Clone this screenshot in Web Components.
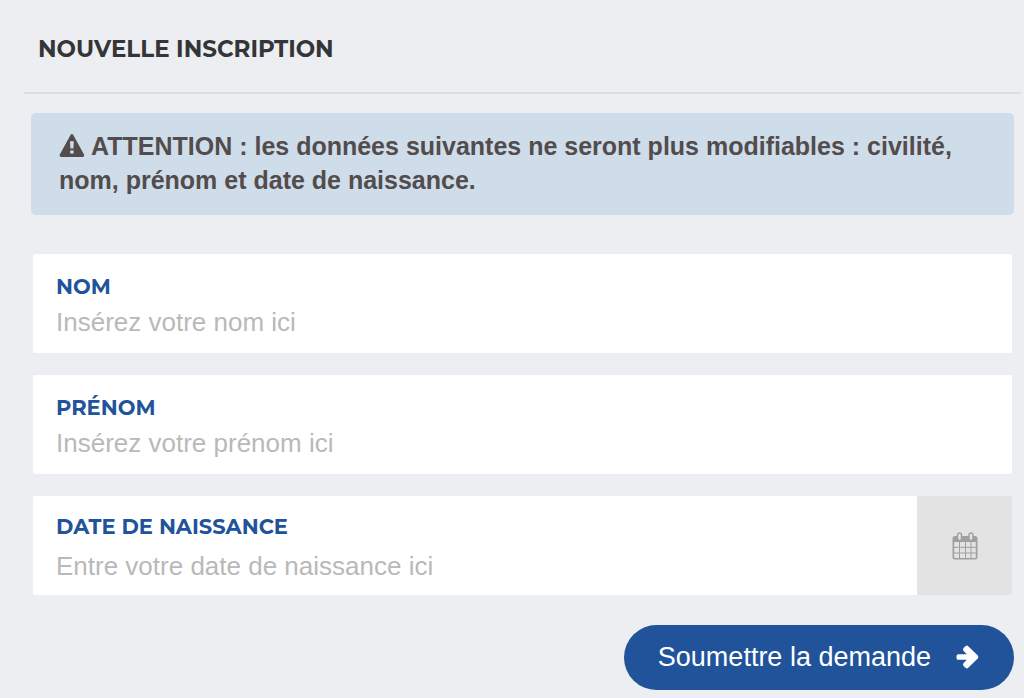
<!DOCTYPE html>
<html lang="fr">
<head>
<meta charset="utf-8">
<meta name="viewport" content="width=device-width, initial-scale=1">
<title>Nouvelle inscription</title>
<style>
  html { background: #edeef2; }
  body { margin: 0; background: #edeef2; font-family: "Liberation Sans", Arial, sans-serif; }
</style>
</head>
<body>
<registration-form></registration-form>

<template id="form-template">
  <style>
    :host { display: block; }
    form { display: flex; flex-direction: column; padding: 0 10px 8px 31px; }
    .fields { display: flex; flex-direction: column; gap: 22px; padding: 39px 2px 30px; }
    .actions { display: flex; justify-content: flex-end; }
  </style>
  <section-title>NOUVELLE INSCRIPTION</section-title>
  <form>
    <alert-banner>ATTENTION : les données suivantes ne seront plus modifiables : civilité, nom, prénom et date de naissance.</alert-banner>
    <div class="fields">
      <text-field label="NOM" placeholder="Insérez votre nom ici"></text-field>
      <text-field label="PRÉNOM" placeholder="Insérez votre prénom ici"></text-field>
      <text-field class="date" label="DATE DE NAISSANCE" placeholder="Entre votre date de naissance ici">
        <calendar-button slot="action"></calendar-button>
      </text-field>
    </div>
    <div class="actions"><submit-button>Soumettre la demande</submit-button></div>
  </form>
</template>

<template id="title-template">
  <style>
    :host { display: block; margin: 0 3px 19px 24px; border-bottom: 2px solid #dcdde1; }
    h1 { margin: 0; padding: 35px 14px 29px; font: 700 23px/28px Montserrat, Inter, sans-serif; color: #333536; }
  </style>
  <h1><slot></slot></h1>
</template>

<template id="alert-template">
  <style>
    :host { display: block; background: #cfdcea; border-radius: 5px; }
    p { margin: 0; padding: 16px 28px 18px; font-size: 25px; line-height: 34px; font-weight: 700; color: #524d4c; }
    svg { width: 26px; height: 23px; vertical-align: -2px; }
  </style>
  <p role="alert"><svg viewBox="0 0 26 23" aria-hidden="true"><path fill="currentColor" fill-rule="evenodd" d="M11.5 1Q12.9-.8 14.3 1L25 20.4Q25.9 22.8 23.4 23H2.4Q-.1 22.8.8 20.4ZM11 7.2L11.4 14.6H14.4L14.8 7.2ZM11.2 16.4V19.6H14.6V16.4Z"/></svg> <slot></slot></p>
</template>

<template id="field-template">
  <style>
    :host { display: flex; background: #fff; border-radius: 2px; }
    .box { flex: 1; min-width: 0; display: flex; flex-direction: column; padding: 20px 23px 15px; }
    label { font: 700 21px/26px Montserrat, Inter, sans-serif; color: #21539b; }
    input { box-sizing: border-box; width: 100%; height: 32px; margin: 6px 0 0; padding: 0; border: 0; outline: 0; background: transparent; font: 26px/32px "Liberation Sans", Arial, sans-serif; color: #333536; }
    input::placeholder { color: #b9b9b9; opacity: 1; }
    :host(.date) .box { padding: 18px 23px 13px; }
    :host(.date) input { margin-top: 10px; }
  </style>
  <div class="box">
    <label for="control"></label>
    <input id="control" type="text">
  </div>
  <slot name="action"></slot>
</template>

<template id="calendar-template">
  <style>
    :host { display: flex; width: 95px; }
    button { flex: 1; display: flex; align-items: center; justify-content: center; margin: 0; padding: 0; border: 0; border-radius: 0 2px 2px 0; background: #e3e3e3; color: #a19fa0; cursor: pointer; }
    svg { width: 26px; height: 28px; }
  </style>
  <button type="button" aria-label="Ouvrir le calendrier">
    <svg viewBox="0 0 26 28" aria-hidden="true">
      <path fill="currentColor" fill-rule="evenodd" d="M3 4H23Q25.5 4 25.5 6.5V25Q25.5 27.5 23 27.5H3Q.5 27.5.5 25V6.5Q.5 4 3 4ZM2.2 10V25Q2.2 26 3.2 26H22.8Q23.8 26 23.8 25V10Z"/>
      <path fill="none" stroke="currentColor" d="M7.5 10V26M13.5 10V26M19 10V26M2 15.3H24M2 21H24"/>
      <rect x="5.5" y="1" width="4" height="7.5" rx="2" fill="#e3e3e3" stroke="currentColor" stroke-width="1.4"/>
      <rect x="17" y="1" width="4" height="7.5" rx="2" fill="#e3e3e3" stroke="currentColor" stroke-width="1.4"/>
    </svg>
  </button>
</template>

<template id="submit-template">
  <style>
    :host { display: block; }
    button { display: flex; align-items: center; gap: 25px; margin: 0; padding: 15px 35px 16px 34px; border: 0; border-radius: 33px; background: #21539b; color: #fff; font: 27px/34px "Liberation Sans", Arial, sans-serif; cursor: pointer; }
    svg { width: 23px; height: 24px; }
  </style>
  <button type="submit"><span><slot></slot></span>
    <svg viewBox="0 0 23 24" aria-hidden="true"><path fill="#fff" d="M2.4 9.2H10.8L7.6 5.9Q6.3 4.5 7.6 3.1L9.4 1.2Q10.8 0 12.2 1.2L21.8 10.6Q23 12 21.8 13.4L12.2 22.8Q10.8 24 9.4 22.8L7.6 20.9Q6.3 19.5 7.6 18.1L10.8 14.8H2.4Q.5 14.8.5 12.9V11.1Q.5 9.2 2.4 9.2Z"/></svg>
  </button>
</template>

<script>
  class TemplateElement extends HTMLElement {
    constructor() {
      super();
      const template = document.getElementById(this.constructor.template);
      this.attachShadow({ mode: "open" }).append(template.content.cloneNode(true));
    }
  }
  class SectionTitle extends TemplateElement { static template = "title-template"; }
  class AlertBanner extends TemplateElement { static template = "alert-template"; }
  class CalendarButton extends TemplateElement { static template = "calendar-template"; }
  class SubmitButton extends TemplateElement { static template = "submit-template"; }
  class RegistrationForm extends TemplateElement { static template = "form-template"; }
  class TextField extends TemplateElement {
    static template = "field-template";
    connectedCallback() {
      this.shadowRoot.querySelector("label").textContent = this.getAttribute("label");
      this.shadowRoot.querySelector("input").placeholder = this.getAttribute("placeholder");
    }
  }
  customElements.define("section-title", SectionTitle);
  customElements.define("alert-banner", AlertBanner);
  customElements.define("text-field", TextField);
  customElements.define("calendar-button", CalendarButton);
  customElements.define("submit-button", SubmitButton);
  customElements.define("registration-form", RegistrationForm);
</script>
</body>
</html>
